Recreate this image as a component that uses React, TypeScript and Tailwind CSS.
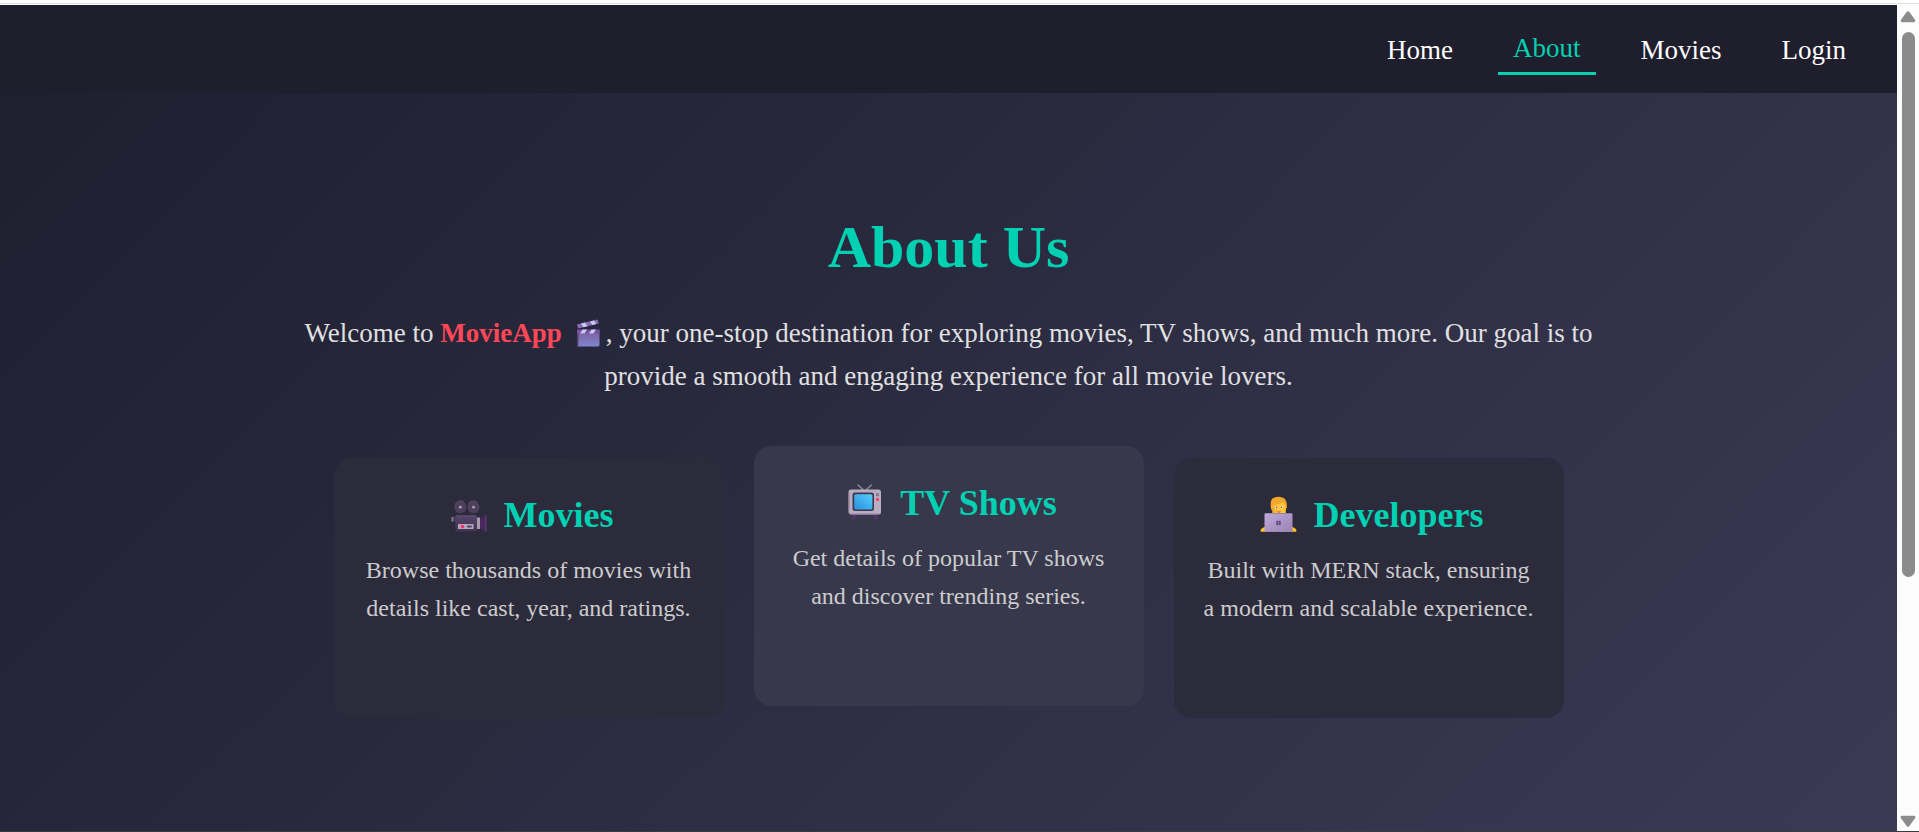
import type { ReactNode } from "react";

const links = [
  { label: "Home", active: false },
  { label: "About", active: true },
  { label: "Movies", active: false },
  { label: "Login", active: false },
];

function Clapper() {
  return (
    <svg viewBox="0 0 36 36" className="ml-2 inline-block h-9 w-9 align-[-11px]" aria-hidden="true">
      <defs>
        <linearGradient id="clap" x1="0" y1="0" x2="0" y2="1">
          <stop offset="0" stopColor="#7a5d98" />
          <stop offset="1" stopColor="#8086d0" />
        </linearGradient>
      </defs>
      <path d="M7 13h22.500v15a1.500 1.500 0 0 1-1.500 1.500H8.500A1.500 1.500 0 0 1 7 28z" fill="url(#clap)" />
      <path d="M7 13h1.500v16.500A1.500 1.500 0 0 1 7 28z" fill="#55406f" />
      <path d="M7 12.500h22.500v4H7z" fill="#7a4fa5" />
      <path d="M12.500 12.500h4.500l-2.500 4H10zM21.500 12.500H26l-2.500 4H19z" fill="#c9c6f8" />
      <path d="M7 7.500 27.500 2.500l1.300 4L8.200 11.500z" fill="#8a6bb0" />
      <path d="m11 6.600 4-1 2.500 3.600-4 1zM20 4.400l4-1 2.300 3.600-4 1z" fill="#c9c6f8" />
    </svg>
  );
}

function Camera() {
  return (
    <svg viewBox="0 0 40 40" className="h-10 w-10" aria-hidden="true">
      <defs>
        <linearGradient id="cam" x1="0" y1="0" x2="0" y2="1">
          <stop offset="0" stopColor="#54446a" />
          <stop offset="1" stopColor="#43344f" />
        </linearGradient>
      </defs>
      <g transform="translate(0 3.500)">
        <path d="M3.500 18.500h2V23h-2z" fill="#8c7c9c" />
        <path d="M5.500 18H8v5H5.500z" fill="#4b3a5c" />
        <circle cx="12.300" cy="8.700" r="6" fill="#4e405c" />
        <circle cx="25.500" cy="8.700" r="6" fill="#4e405c" />
        <path d="M7.300 6a5.500 5.500 0 0 1 9-2M20.500 6a5.500 5.500 0 0 1 9-2" fill="none" stroke="#625170" />
        <circle cx="12.300" cy="8.700" r="1.400" fill="#aaa0bd" />
        <circle cx="25.500" cy="8.700" r="1.400" fill="#aaa0bd" />
        <rect x="7.500" y="17" width="21.500" height="16" rx="1.800" fill="url(#cam)" />
        <path d="M8 17.500h20" stroke="#67517a" />
        <path d="M29 19h3v11.500h-3z" fill="#a99bae" />
        <path d="m32 20 6-3.500V33.500L32 29.500z" fill="#4a275f" />
        <path d="M38 16.500v17" stroke="#65517a" strokeWidth=".8" />
        <rect x="10" y="25.500" width="15.500" height="5" rx=".5" fill="#b3a3bf" />
        <rect x="13" y="26.500" width="3" height="3" rx=".8" fill="#ff2c67" />
        <rect x="19" y="27" width="5" height="2" rx="1" fill="#514458" />
      </g>
    </svg>
  );
}

function Television() {
  return (
    <svg viewBox="0 0 40 40" className="h-10 w-10" aria-hidden="true">
      <defs>
        <linearGradient id="screen" x1="0" y1="1" x2="1" y2="0">
          <stop offset="0" stopColor="#2b8fdd" />
          <stop offset="1" stopColor="#55cffb" />
        </linearGradient>
      </defs>
      <g transform="translate(1 -1.500)">
        <path d="m13 3.500 6 5.500m7.500-5.500L20.500 9" fill="none" stroke="#918995" strokeWidth="1.400" strokeLinecap="round" />
        <path d="m10.800 32-2.300 5m20.300-5 2.300 5" fill="none" stroke="#55356f" strokeWidth="2.600" strokeLinecap="round" />
        <rect x="3.500" y="8" width="32.500" height="25" rx="2.500" fill="#b9adc1" />
        <path d="M4 11v19.500q0 2 2 2h28" fill="none" stroke="#948199" />
        <rect x="7.500" y="11" width="21.500" height="18.500" rx="2.500" fill="#3f3850" />
        <rect x="9.200" y="12.700" width="18.200" height="15.200" rx="1.500" fill="url(#screen)" />
        <circle cx="32.500" cy="13.200" r="1.700" fill="#85798e" />
        <circle cx="32.500" cy="18" r="1.600" fill="#ff3568" />
      </g>
    </svg>
  );
}

function Developer() {
  return (
    <svg viewBox="0 0 40 40" className="h-10 w-10" aria-hidden="true">
      <defs>
        <linearGradient id="laptop" x1="0" y1="0" x2="1" y2="1">
          <stop offset="0" stopColor="#bea9d9" />
          <stop offset="1" stopColor="#9983b5" />
        </linearGradient>
        <linearGradient id="face" x1="0" y1="0" x2="1" y2="0">
          <stop offset="0" stopColor="#f9a62a" />
          <stop offset=".5" stopColor="#ffc83d" />
          <stop offset="1" stopColor="#ffc52f" />
        </linearGradient>
      </defs>
      <path d="M13 13Q11.500 4 16 2.800q4-1.800 8.500-.3 5 1.500 4.200 10.500z" fill="#f3a62c" />
      <path d="M14.200 9.500Q20 10 25 7.500q1.500 1.500 2.800 2V18h-13.600z" fill="url(#face)" />
      <path d="M13.500 10.500q-1.200 1.500 0 4.500h1v-4.500zM27.700 10.500q1.500 1.500 0 4.500h-.7v-4.500z" fill="#fcb52f" />
      <circle cx="18" cy="12.300" r="1.200" fill="#fff" />
      <circle cx="23.800" cy="12.300" r="1.200" fill="#fff" />
      <circle cx="18.300" cy="12.300" r=".8" fill="#563428" />
      <circle cx="23.500" cy="12.300" r=".8" fill="#563428" />
      <path d="M19 16q2 1 4 0-.5 1.800-2 1.800T19 16" fill="#d5434b" />
      <path d="M2.500 35.500q.8-3 4.500-3.500v4.700H3.500q-1 0-1-1.200M38.500 35.500q-.8-3-4.500-3.500v4.700h3.500q1 0 1-1.200" fill="#ffc222" />
      <rect x="6.500" y="18.300" width="28" height="18.400" rx="1.200" fill="url(#laptop)" />
      <path d="M7 36.200h27" stroke="#a994bd" />
      <path d="M18.500 26h1.600v1.500h-1.600zm2.400 0h1.600v1.500h-1.600zm-2.400 2.300h1.600v1.500h-1.600zm2.400 0h1.600v1.500h-1.600z" fill="#584173" stroke="#584173" strokeWidth=".4" />
    </svg>
  );
}

type CardProps = { icon: ReactNode; title: string; text: string; raised?: boolean };

function Card({ icon, title, text, raised }: CardProps) {
  return (
    <article
      className={`min-h-[260px] w-full max-w-[390px] rounded-[18px] px-7 pt-9 ${
        raised ? "-translate-y-3 bg-[#38384c]" : "bg-[#2c2b3c]"
      }`}
    >
      <h2 className="flex items-center justify-center gap-4 pl-1 text-[36px] leading-[42px] font-bold text-[#00d1b2]">
        {icon}
        {title}
      </h2>
      <p className="mt-[15px] text-2xl leading-[38px] text-[#cccccc]">{text}</p>
    </article>
  );
}

function Scrollbar() {
  return (
    <div className="flex w-[22px] shrink-0 flex-col items-center bg-[#fcfcfc] pt-1.5 pb-1" aria-hidden="true">
      <svg viewBox="0 0 16 12" className="h-3 w-4 shrink-0" fill="#8b8b8b">
        <path d="M6.800.8q1.200-1.300 2.400 0l5.800 8q1 2.200-1 2.400H2q-2-.2-1-2.400z" />
      </svg>
      <div className="flex w-full grow flex-col items-center py-[9px]">
        <div className="h-[70.4%] w-[13px] rounded-full bg-[#8b8b8b]" />
      </div>
      <svg viewBox="0 0 16 12" className="h-3 w-4 shrink-0" fill="#8b8b8b">
        <path d="M6.800 11.200q1.200 1.300 2.400 0l5.800-8q1-2.200-1-2.400H2Q0 1 1 3.200z" />
      </svg>
    </div>
  );
}

export default function App() {
  return (
    <div className="flex min-h-screen flex-col border-b border-[#3b3a40] bg-white font-['Liberation_Serif',serif]">
      <div className="h-1 shrink-0 border-b border-[#dedede]" />
      <div className="flex grow pt-px">
        <div className="flex grow flex-col bg-linear-135 from-[#1e1e2f] to-[#3a3a55] text-center">
          <header className="flex min-h-[88px] items-center justify-end bg-[#1f1e2d] px-9 pt-0.5">
            <nav className="flex flex-wrap items-center gap-[30px]">
              {links.map(({ label, active }) => (
                <a
                  key={label}
                  href="#"
                  className={`px-[15px] py-2 text-[27px] leading-[31px] ${
                    active ? "border-b-3 border-[#00d1b2] text-[#00d1b2]" : "text-white"
                  }`}
                >
                  {label}
                </a>
              ))}
            </nav>
          </header>
          <main className="flex flex-col items-center px-8 pt-[120px] pb-28">
            <h1 className="text-6xl leading-[69px] font-bold text-[#00d1b2]">About Us</h1>
            <p className="mt-[30px] max-w-[1350px] text-[27px] leading-[43px] text-[#e0e0e0]">
              Welcome to <strong className="font-bold text-[#ff4757]">MovieApp</strong>
              <Clapper />, your one-stop destination for exploring movies, TV shows, and much more. Our goal is to
              provide a smooth and engaging experience for all movie lovers.
            </p>
            <section className="mt-[60px] flex w-full max-w-[1230px] justify-center gap-[30px]">
              <Card
                icon={<Camera />}
                title="Movies"
                text="Browse thousands of movies with details like cast, year, and ratings."
              />
              <Card
                icon={<Television />}
                title="TV Shows"
                text="Get details of popular TV shows and discover trending series."
                raised
              />
              <Card
                icon={<Developer />}
                title="Developers"
                text="Built with MERN stack, ensuring a modern and scalable experience."
              />
            </section>
          </main>
        </div>
        <Scrollbar />
      </div>
    </div>
  );
}
